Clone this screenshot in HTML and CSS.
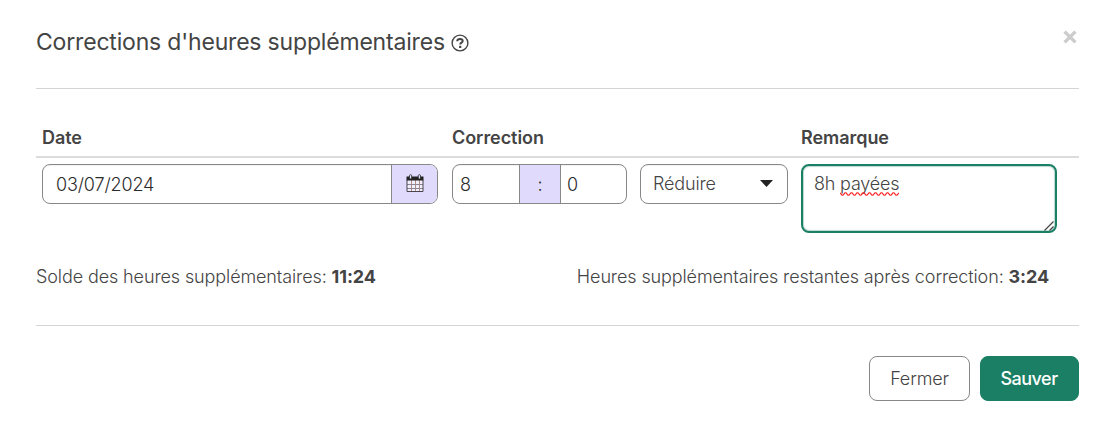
FILE: index.html
```
<!DOCTYPE html>
<html lang="fr">
<head>
  <meta charset="UTF-8" />
  <meta name="viewport" content="width=device-width, initial-scale=1" />
  <title>Corrections d'heures supplémentaires</title>
  <link rel="stylesheet" href="styles.css">
</head>
<body>

  <form class="modal">
    <header class="modal-header">
      <h1>Corrections d'heures supplémentaires</h1>
      <svg class="help" viewBox="0 0 18 18" role="img" aria-label="Aide">
        <circle cx="9" cy="9" r="7.9" />
        <path d="M6.2 7.2C6.3 5.6 7.5 4.9 9 4.9s2.7.8 2.7 2.1c0 1.7-2.5 1.7-2.5 3.4" />
        <rect x="8.1" y="11.8" width="2.2" height="2.2" />
      </svg>
      <button type="button" class="close" aria-label="Fermer">
        <svg viewBox="0 0 14 14"><path d="M1.6 1.6l10.8 10.8M12.4 1.6L1.6 12.4" /></svg>
      </button>
    </header>

    <div class="row head">
      <div>Date</div>
      <div class="head-correction">Correction</div>
      <div>Remarque</div>
    </div>

    <div class="row fields">
      <div class="group group-date">
        <input type="text" class="date" value="03/07/2024" aria-label="Date" />
        <span class="addon addon-date">
          <svg class="calendar" viewBox="0 0 18 19">
            <path class="cal-body" d="M1 3h16v15H1z" />
            <path class="cal-line" d="M5.5 6v12M9.5 6v12M13.5 6v12" />
            <path class="cal-row" d="M1 10.5h16M1 14.5h16" />
            <path class="cal-edge" d="M1 6v11.5h16V6" />
            <path class="cal-top" d="M.5 2.5h17v4H.5z" />
            <rect class="cal-ring" x="3.5" y=".7" width="2.2" height="4.2" rx="1" />
            <rect class="cal-ring" x="12.3" y=".7" width="2.2" height="4.2" rx="1" />
          </svg>
        </span>
      </div>

      <div class="group">
        <input type="text" class="hours" value="8" aria-label="Heures" />
        <span class="addon addon-colon">:</span>
        <input type="text" class="minutes" value="0" aria-label="Minutes" />
      </div>

      <div class="select" role="combobox" tabindex="0">
        <span>Réduire</span>
        <svg class="caret" viewBox="0 0 13 7"><path d="M0 0h13L6.5 7z" /></svg>
      </div>

      <div class="remark" contenteditable="true">8h <span class="typo">payées<svg class="squiggle" viewBox="0 0 59 4"><path d="M0 .8l2 2.4h1l2-2.4h1l2 2.4h1l2-2.4h1l2 2.4h1l2-2.4h1l2 2.4h1l2-2.4h1l2 2.4h1l2-2.4h1l2 2.4h1l2-2.4h1l2 2.4h1l2-2.4h1l2 2.4h1l2-2.4h1l2 2.4h1l2-2.4h1l2 2.4h1l2-2.4" /></svg></span><svg class="grip" viewBox="0 0 11 11"><path d="M.5 10.5l9-9M5.5 10.5l4-4" /></svg></div>
    </div>

    <div class="summary">
      <p>Solde des heures supplémentaires: <b>11:24</b></p>
      <p>Heures supplémentaires restantes après correction: <b>3:24</b></p>
    </div>

    <footer>
      <button type="button" class="btn">Fermer</button>
      <button type="submit" class="btn btn-primary">Sauver</button>
    </footer>
  </form>

</body>
</html>
```
FILE: styles.css
```
* {
  margin: 0; padding: 0; box-sizing: border-box;
}
body {
  font-family: Inter, sans-serif;
  font-size: 18px;
  font-weight: 300;
  line-height: 26px;
  letter-spacing: -0.14px;
  color: #444;
  background: #fff;
}

input, button {
  font: inherit;
  color: inherit;
  letter-spacing: inherit;
}

.modal {
  padding: 0 29px 0 36px;
}

.modal-header {
  display: flex;
  align-items: flex-start;
  height: 89px;
  padding-top: 26px;
  border-bottom: 1px solid #d4d4d4;
}

h1 {
  font-size: 23px;
  font-weight: 400;
  line-height: 32px;
  letter-spacing: -0.18px;
}

.help {
  width: 18px;
  height: 18px;
  margin: 8px 0 0 6px;
  fill: none;
  stroke: #444;
  stroke-width: 1.4;
}
.help path {
  stroke-width: 2;
}
.help rect {
  fill: #444;
  stroke: none;
}

.close {
  display: flex;
  margin: 4px 2px 0 auto;
  border: none;
  background: none;
  cursor: pointer;
}
.close svg {
  width: 14px;
  height: 14px;
  fill: none;
  stroke: #ccc;
  stroke-width: 3.4;
}

.row {
  display: grid;
  grid-template-columns: 397px 175px 148px 256px;
  column-gap: 13px;
  padding-left: 6px;
}

.head {
  height: 69px;
  padding-top: 36px;
  border-bottom: 2px solid #dcdcdc;
  font-weight: 600;
  letter-spacing: -0.05px;
}
.head-correction {
  grid-column: span 2;
}

.fields {
  height: 75px;
  padding-top: 6px;
  align-items: start;
}

.group, .select {
  display: flex;
  height: 40px;
  border: 1px solid #888;
  border-radius: 8px;
  overflow: hidden;
  box-shadow: inset 0 1px 1px rgba(0,0,0,0.06);
}
.group-date {
  width: 396px;
}

.group input {
  min-width: 0;
  padding-top: 2px;
  border: none;
  outline: none;
  background: transparent;
  color: #2b2b2b;
}
.group .date {
  flex: 1;
  padding-left: 13px;
}
.group .hours {
  width: 66px;
  padding-left: 7px;
}
.group .minutes {
  flex: 1;
  padding-left: 6px;
}

.addon {
  display: flex;
  align-items: center;
  justify-content: center;
  background: #e0dafc;
  border-left: 1px solid #888;
  color: #2b2b2b;
}
.addon-date {
  width: 46px;
}
.addon-colon {
  width: 42px;
  padding-top: 2px;
  border-right: 1px solid #888;
}

.calendar {
  width: 18px;
  height: 19px;
  margin: 0 0 1px 1px;
}
.cal-body {
  fill: #f1eefd;
}
.cal-top {
  fill: #222;
}
.cal-line, .cal-row, .cal-edge {
  fill: none;
  stroke: #4a4450;
}
.cal-line {
  stroke: #b58f86;
}
.cal-row {
  stroke: #8b8598;
}
.cal-ring {
  fill: #dfe4fa;
  stroke: #222;
  stroke-width: 0.8;
}

.select {
  align-items: center;
  justify-content: space-between;
  padding: 0 14px 0 12px;
}
.caret {
  width: 13px;
  height: 7px;
  margin-bottom: 1px;
  fill: #222;
}

.remark {
  position: relative;
  height: 69px;
  padding: 5px 11px;
  border: 2px solid #1a7f64;
  border-radius: 8px;
  outline: none;
  letter-spacing: -0.2px;
  box-shadow: inset 0 0 1px 1px rgba(26,127,100,0.3);
}
.typo {
  position: relative;
}
.squiggle {
  position: absolute;
  left: 0;
  bottom: -2px;
  width: 59px;
  height: 4px;
  fill: none;
  stroke: #f22;
  stroke-width: 1.1;
}
.grip {
  position: absolute;
  right: 0;
  bottom: 0;
  width: 11px;
  height: 11px;
  fill: none;
  stroke: #444;
  stroke-width: 1.2;
}

.summary {
  display: flex;
  justify-content: space-between;
  height: 93px;
  padding: 31px 30px 0 0;
  border-bottom: 1px solid #d4d4d4;
  letter-spacing: -0.11px;
}
.summary b {
  font-weight: 700;
}

footer {
  display: flex;
  justify-content: flex-end;
  gap: 10px;
  padding-top: 30px;
}

.btn {
  width: 101px;
  height: 45px;
  border: 1px solid #888;
  border-radius: 8px;
  background: #fff;
  cursor: pointer;
}
.btn-primary {
  width: 99px;
  padding-right: 1px;
  border-color: #1a7f64;
  background: #1a7f64;
  color: #fff;
  font-weight: 500;
  letter-spacing: -0.5px;
}
```
